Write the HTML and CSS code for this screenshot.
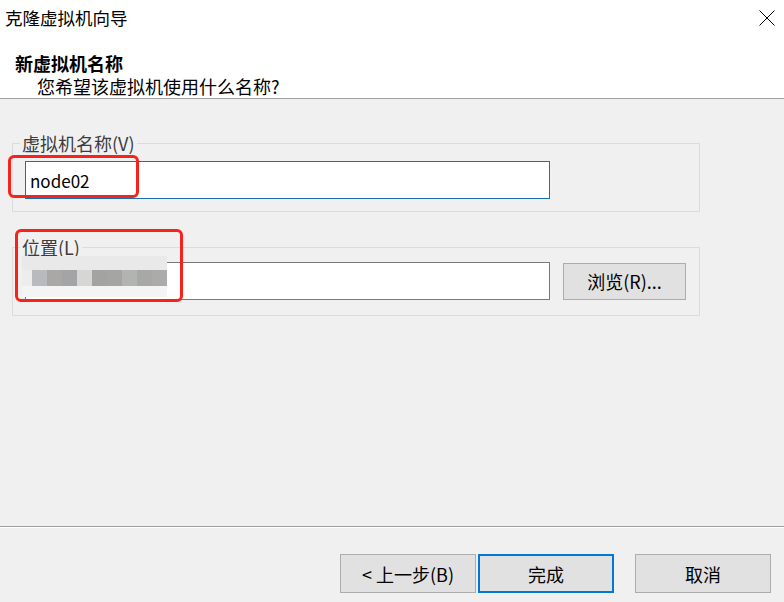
FILE: index.html
```html
<!DOCTYPE html>
<html lang="zh-CN">
<head>
  <meta charset="UTF-8">
  <meta name="viewport" content="width=device-width, initial-scale=1.0">
  <title>克隆虚拟机向导</title>
  <link rel="stylesheet" href="styles.css">
</head>
<body>
  <div class="wizard">
    <!-- Window title -->
    <div class="titlebar">
      <span class="title">克隆虚拟机向导</span>
      <button class="close" aria-label="关闭">
        <svg width="16" height="16" viewBox="0 0 16 16">
          <path d="M0.5 0.5 L15.5 15.5 M15.5 0.5 L0.5 15.5" stroke="#000" stroke-width="1" fill="none"/>
        </svg>
      </button>
    </div>

    <!-- Page header -->
    <div class="header">
      <div class="heading">新虚拟机名称</div>
      <div class="subheading">您希望该虚拟机使用什么名称?</div>
    </div>

    <!-- Form body -->
    <div class="content">
      <fieldset class="group group-name">
        <legend>虚拟机名称(V)</legend>
        <input type="text" class="field field-focus" value="node02">
        <span class="mark mark-name"></span>
      </fieldset>

      <fieldset class="group group-path">
        <legend>位置(L)</legend>
        <div class="row">
          <div class="field-wrap">
            <input type="text" class="field" value="">
            <div class="mosaic">
              <div class="mosaic-row top">
                <span class="narrow"></span><span></span><span></span><span></span><span></span><span></span><span></span><span></span><span></span><span></span>
              </div>
              <div class="mosaic-row mid">
                <span class="narrow" style="background:#ededed"></span>
                <span style="background:#b9babd"></span>
                <span style="background:#a9a8a6"></span>
                <span style="background:#a4a4a6"></span>
                <span style="background:#d6d6d4"></span>
                <span style="background:#a3a3a1"></span>
                <span style="background:#a5a5a3"></span>
                <span style="background:#b2b4af"></span>
                <span style="background:#a8a9a6"></span>
                <span style="background:#ababab"></span>
              </div>
              <div class="mosaic-row low">
                <span class="narrow"></span><span></span><span></span><span></span><span></span><span></span><span></span><span></span><span></span><span></span>
              </div>
            </div>
          </div>
          <button class="btn btn-browse">浏览(R)...</button>
        </div>
        <span class="mark mark-path"></span>
      </fieldset>
    </div>

    <!-- Wizard navigation -->
    <div class="footer">
      <button class="btn">&lt; 上一步(B)</button>
      <button class="btn btn-default">完成</button>
      <button class="btn btn-cancel">取消</button>
    </div>
  </div>
</body>
</html>
```

FILE: styles.css
```css
/* Base window */
html, body {
  margin: 0;
  height: 100%;
}

body {
  background: #f0f0f0;
  font-family: "Noto Sans CJK SC", "Noto Sans", sans-serif;
  font-size: 18px;
  color: #000;
}

.wizard {
  display: flex;
  flex-direction: column;
  height: 602px;
  width: 784px;
}

/* Title bar */
.titlebar {
  display: flex;
  align-items: center;
  justify-content: space-between;
  height: 36px;
  padding: 0 9px 0 5px;
  background: #fff;
}

.title {
  font-size: 17.5px;
  line-height: 36px;
}

.close {
  display: flex;
  padding: 0;
  border: none;
  background: none;
  margin-top: -1px;
}

/* Header */
.header {
  background: #fff;
  padding: 15px 0 0 0;
  height: 47px;
  border-bottom: 1px solid #a0a0a0;
}

.heading {
  font-weight: bold;
  line-height: 24px;
  padding-left: 15px;
}

.subheading {
  line-height: 22px;
  padding-left: 37px;
}

/* Content */
.content {
  flex: 1;
  padding: 0 84px 0 12px;
}

.group {
  position: relative;
  margin: 0;
  padding: 7px 12px 12px 12px;
  border: 1px solid #dcdcdc;
  min-width: 0;
}

.group legend {
  padding: 0 2px;
  margin-left: -5px;
  line-height: 22px;
  color: #3c3c3c;
}

.group-name {
  margin-top: 33px;
}

.group-path {
  margin-top: 24px;
  padding-top: 4px;
  padding-bottom: 15px;
}

.field {
  display: block;
  box-sizing: border-box;
  width: 525px;
  height: 38px;
  margin: 0;
  padding: 0 4px;
  border: 1px solid #7a7a7a;
  background: #fff;
  font-family: inherit;
  font-size: 17px;
  color: #000;
  outline: none;
}

.field-focus {
  border-color: #1a70b2;
}

.row {
  display: flex;
  align-items: center;
  gap: 13px;
}

.field-wrap {
  position: relative;
}

/* Blurred path value */
.mosaic {
  position: absolute;
  left: -3px;
  top: -6px;
  display: flex;
  flex-direction: column;
}

.mosaic-row {
  display: flex;
}

.mosaic-row span {
  width: 15px;
  background: #f0f0f0;
}

.mosaic-row span.narrow {
  width: 10px;
}

.mosaic-row.top span {
  height: 14px;
  background: #e9e9e9;
}

.mosaic-row.mid span {
  height: 16px;
}

.mosaic-row.low span {
  height: 11px;
  background: #f4f4f4;
}

/* Red annotation frames */
.mark {
  position: absolute;
  border: 3px solid #f5231b;
  border-radius: 6px;
  pointer-events: none;
}

.mark-name {
  left: -5px;
  top: 1px;
  width: 125px;
  height: 37px;
}

.mark-path {
  left: 2px;
  top: -29px;
  width: 162px;
  height: 67px;
}

/* Buttons */
.btn {
  box-sizing: border-box;
  width: 136px;
  height: 39px;
  margin: 0;
  padding: 0;
  border: 1px solid #adadad;
  background: #e1e1e1;
  font-family: inherit;
  font-size: 18px;
  color: #000;
}

.btn-browse {
  width: 123px;
  height: 37px;
}

.btn-default {
  border: 2px solid #0078d7;
}

.footer {
  display: flex;
  gap: 2px;
  justify-content: flex-end;
  padding: 27px 13px 9px 0;
  border-top: 1px solid #a0a0a0;
  box-shadow: inset 0 1px 0 #fff;
}

.btn-cancel {
  margin-left: 19px;
}
```
